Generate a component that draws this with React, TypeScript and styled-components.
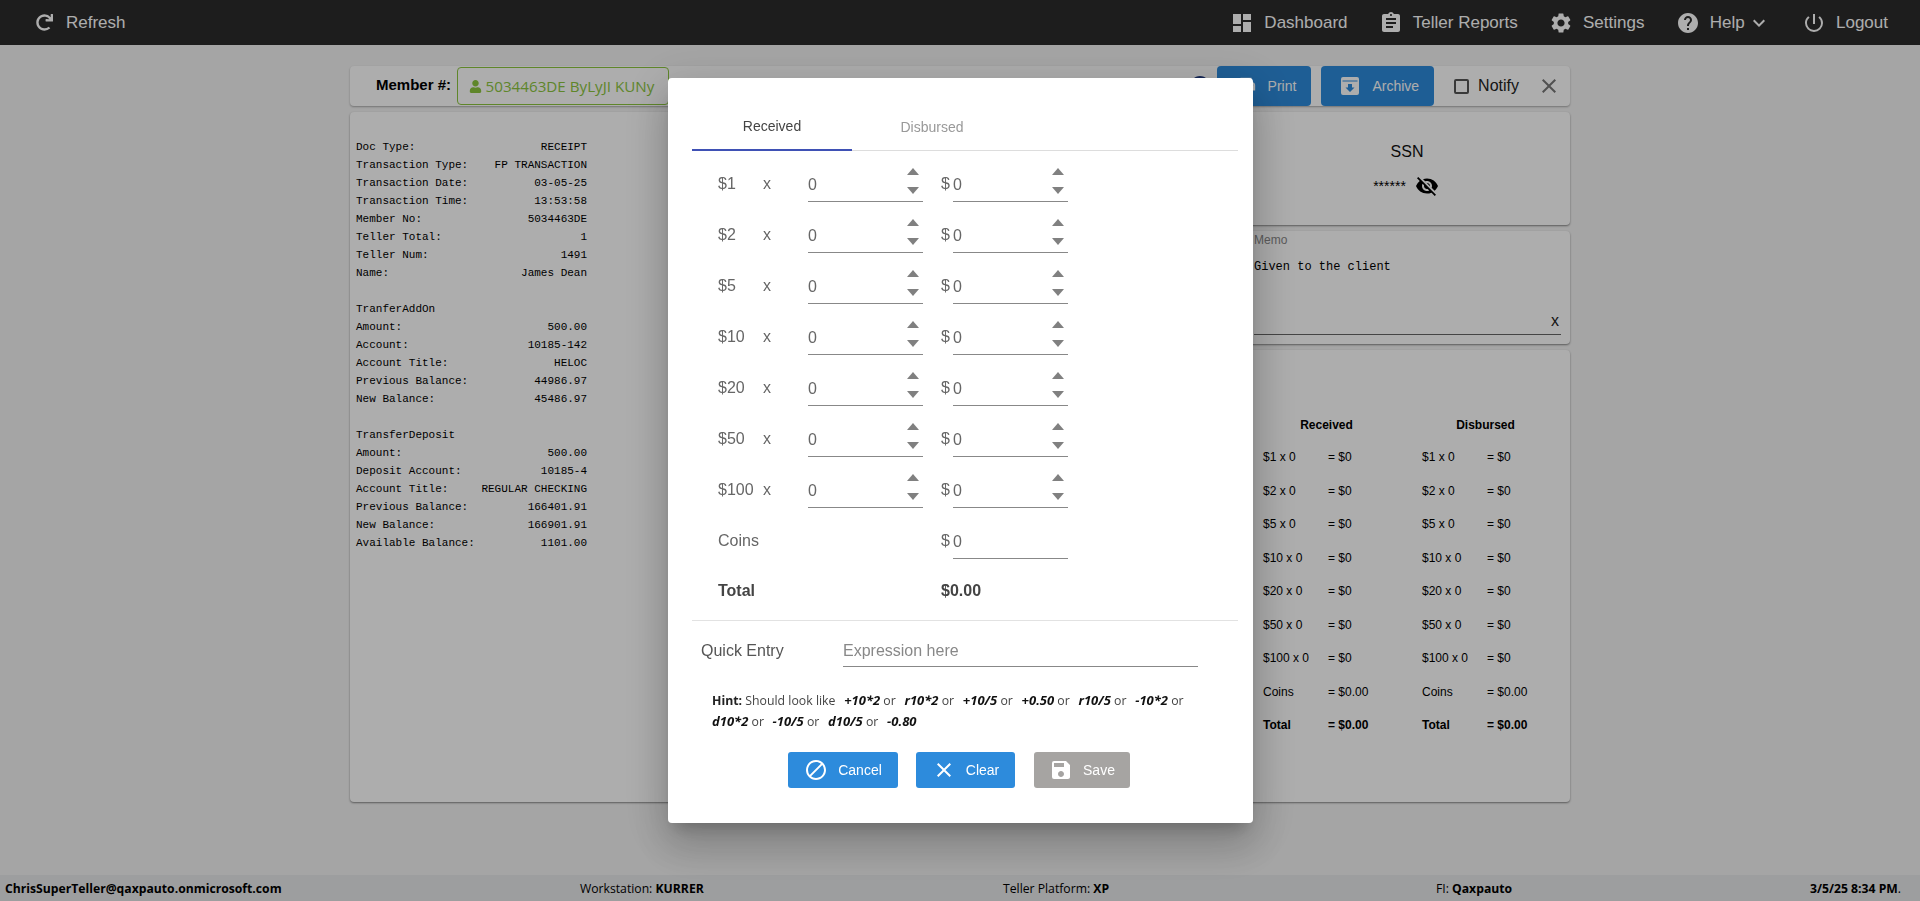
import React from "react";
import styled, { createGlobalStyle } from "styled-components";
import { FaRedo, FaUser } from "react-icons/fa";
import {
  MdClose,
  MdDashboard,
  MdBlock,
  MdSave,
  MdSettings,
  MdVisibilityOff,
  MdPrint,
  MdPowerSettingsNew,
  MdExpandMore,
  MdHelp,
  MdAssignment,
  MdInfo,
} from "react-icons/md";

const GlobalStyle = createGlobalStyle`
  html, body {
    margin: 0;
    height: 100%;
    overflow: hidden;
    background: #f3f3f3;
    font-family: "Liberation Sans", Arial, sans-serif;
  }
  * { box-sizing: border-box; }
`;

const Page = styled.div`
  height: 901px;
  display: flex;
  flex-direction: column;
`;

const TopBar = styled.header`
  height: 45px;
  flex: none;
  background: #2c2c2c;
  color: #fff;
  display: flex;
  align-items: center;
  justify-content: space-between;
  padding: 0 32px 0 36px;
  font-size: 17px;
`;

const NavGroup = styled.nav`
  display: flex;
  align-items: center;
  gap: 31.3px;
`;

const NavItem = styled.div`
  display: flex;
  align-items: center;
  gap: 10px;
  svg { font-size: 24px; }
`;

const RefreshItem = styled(NavItem)`
  gap: 13px;
  svg { font-size: 17px; }
`;

const HelpChevron = styled(MdExpandMore)`
  margin-left: -8px;
`;

const Main = styled.main`
  flex: 1;
  width: 1220px;
  margin: 21px auto 0;
  display: flex;
  flex-direction: column;
  gap: 6px;
`;

const Toolbar = styled.div`
  height: 40px;
  background: #fff;
  border-radius: 4px;
  box-shadow: 0 1px 2px rgba(0, 0, 0, 0.3);
  display: flex;
  align-items: center;
  padding: 0 9px 0 26px;
`;

const MemberLabel = styled.b`
  font-size: 15px;
  color: #000;
  margin: 0 5.5px 4px 0;
`;

const MemberBox = styled.div`
  width: 212px;
  height: 38px;
  border: 1px solid #8cc63f;
  border-radius: 4px;
  color: #8cc63f;
  font-size: 15.2px;
  font-family: "Open Sans", sans-serif;
  white-space: nowrap;
  display: flex;
  align-items: center;
  gap: 4px;
  padding-left: 11px;
  svg { font-size: 13px; }
`;

const ToolbarSpacer = styled.div`
  flex: 1;
`;

const StatusIcon = styled(MdInfo)`
  font-size: 24px;
  color: #1f3a80;
  margin-right: 5px;
`;

const ActionButton = styled.div`
  height: 40px;
  background: #2d8bdc;
  color: #fff;
  border-radius: 4px;
  display: flex;
  align-items: center;
  gap: 11px;
  padding: 0 15px 0 18px;
  font-size: 14px;
  margin-right: 10px;
  svg { font-size: 22px; }
`;

const ArchiveGlyph = styled.svg`
  width: 18px;
  height: 18px;
  margin: 0 2px;
  fill: currentColor;
`;

const Notify = styled.div`
  display: flex;
  align-items: center;
  gap: 9px;
  font-size: 16px;
  color: #222;
  margin: 0 18px 0 10px;
`;

const CheckBox = styled.span`
  width: 15px;
  height: 15px;
  border: 2px solid #555;
  border-radius: 2px;
`;

const CloseIcon = styled(MdClose)`
  font-size: 24px;
  color: #777;
`;

const Columns = styled.div`
  flex: 1;
  display: grid;
  grid-template-columns: 1fr 1fr;
  gap: 6px;
  margin-bottom: 73px;
`;

const Card = styled.section`
  background: #fff;
  border-radius: 4px;
  box-shadow: 0 1px 2px rgba(0, 0, 0, 0.45);
`;

const Receipt = styled.pre`
  margin: 0;
  padding: 26px 0 0 6px;
  font-family: "Liberation Mono", monospace;
  font-size: 11px;
  line-height: 18px;
  color: #000;
`;

const SideColumn = styled.div`
  min-width: 0;
  display: grid;
  grid-template-columns: minmax(0, 1fr);
  grid-template-rows: 113px 113px 1fr;
  gap: 6px;
`;

const SsnCard = styled(Card)`
  display: flex;
  flex-direction: column;
  align-items: center;
  padding: 31px 0 0 281px;
`;

const SsnTitle = styled.div`
  font-size: 16px;
  color: #111;
`;

const SsnValue = styled.div`
  display: flex;
  align-items: center;
  gap: 9px;
  font-size: 14px;
  color: #000;
  margin-top: 13px;
  margin-left: -2px;
  svg { font-size: 24px; }
`;

const MemoCard = styled(Card)`
  position: relative;
  padding: 2px 9px 0 291px;
`;

const MemoLabel = styled.div`
  font-size: 12px;
  color: #888;
`;

const MemoText = styled.div`
  font-family: "Liberation Mono", monospace;
  font-size: 12px;
  margin-top: 13px;
  height: 74px;
  color: #000;
`;

const MemoField = styled.div`
  border-bottom: 1px solid #666;
`;

const MemoClear = styled.span`
  position: absolute;
  right: 11px;
  top: 81px;
  font-size: 16px;
  color: #222;
`;

const SummaryCard = styled(Card)`
  padding: 68px 0 0 300px;
  font-size: 12px;
  color: #000;
`;

const SummaryGrid = styled.div`
  display: grid;
  grid-template-columns: 65px 94px 65px 94px;
  grid-template-rows: 32px;
  grid-auto-rows: 33.5px;
`;

const SummaryHead = styled.b`
  grid-column: span 2;
  text-align: center;
  padding-right: 32px;
`;

const SummaryCell = styled.div<{ $bold?: boolean }>`
  font-weight: ${(p) => (p.$bold ? 700 : 400)};
`;

const Footer = styled.footer`
  height: 26px;
  flex: none;
  background: #e8e9ea;
  display: flex;
  align-items: center;
  justify-content: space-between;
  padding: 0 11px 0 5px;
  font-family: "Open Sans", sans-serif;
  font-size: 12.2px;
  color: #000;
`;

const FooterItem = styled.div<{ $width: number }>`
  width: ${(p) => p.$width}px;
  white-space: nowrap;
`;

const Backdrop = styled.div`
  position: fixed;
  inset: 0;
  background: rgba(0, 0, 0, 0.32);
`;

const Modal = styled.div`
  position: fixed;
  left: 668px;
  top: 78px;
  width: 585px;
  height: 745px;
  background: #fff;
  border-radius: 4px;
  padding: 25px 15px 0 24px;
  box-shadow: 0 11px 15px -7px rgba(0, 0, 0, 0.2), 0 24px 38px 3px rgba(0, 0, 0, 0.14),
    0 9px 46px 8px rgba(0, 0, 0, 0.12);
`;

const Tabs = styled.div`
  display: flex;
  height: 48px;
  border-bottom: 1px solid #ddd;
`;

const Tab = styled.div<{ $active?: boolean }>`
  width: 160px;
  height: 48px;
  display: flex;
  align-items: center;
  justify-content: center;
  font-size: 14px;
  color: ${(p) => (p.$active ? "#444" : "#999")};
  border-bottom: ${(p) => (p.$active ? "2px solid #3f51b5" : "none")};
`;

const Rows = styled.div`
  padding-left: 26px;
`;

const DenomRow = styled.div`
  display: grid;
  grid-template-columns: 45px 45px 133px 12px 115px;
  align-items: end;
  height: 51px;
  font-size: 16px;
  color: #666;
`;

const DenomCell = styled.div`
  padding-bottom: 6px;
  line-height: 24px;
`;

const DenomInput = styled.div`
  position: relative;
  height: 30px;
  line-height: 25px;
  width: 115px;
  border-bottom: 1px solid #888;
`;

const Spinner = styled.div`
  position: absolute;
  right: 4px;
  top: -4px;
  display: flex;
  flex-direction: column;
  gap: 12px;
`;

const ArrowUp = styled.i`
  display: block;
  width: 0;
  height: 0;
  border-left: 6.5px solid transparent;
  border-right: 6.5px solid transparent;
  border-bottom: 7px solid #808080;
`;

const ArrowDown = styled.i`
  display: block;
  width: 0;
  height: 0;
  border-left: 6.5px solid transparent;
  border-right: 6.5px solid transparent;
  border-top: 7px solid #808080;
`;

const TotalRow = styled.div`
  display: grid;
  grid-template-columns: 223px 1fr;
  font-size: 16px;
  font-weight: 700;
  color: #444;
  padding: 20px 0 17px;
  line-height: 24px;
`;

const Divider = styled.div`
  height: 1px;
  background: #e2e2e2;
`;

const QuickRow = styled.div`
  display: flex;
  align-items: flex-end;
  padding: 14px 0 0 9px;
  font-size: 16px;
`;

const QuickLabel = styled.div`
  width: 142px;
  color: #555;
  line-height: 24px;
  padding-bottom: 4px;
`;

const QuickInput = styled.div`
  width: 355px;
  height: 32px;
  line-height: 31px;
  color: #888;
  border-bottom: 1px solid #888;
`;

const Hint = styled.div`
  margin: 23px 0 0 20px;
  width: 500px;
  font-family: "Open Sans", sans-serif;
  font-size: 12.3px;
  line-height: 20px;
  color: #444;
  b { color: #222; }
`;

const HintCode = styled.em<{ $first?: boolean }>`
  font-size: 13px;
  font-weight: 700;
  font-style: italic;
  color: #111;
  margin-left: ${(p) => (p.$first ? 0 : 5.5)}px;
`;

const ButtonRow = styled.div`
  display: flex;
  gap: 18px;
  margin: 20px 0 0 96px;
`;

const ModalButton = styled.div<{ $disabled?: boolean; $width: number }>`
  width: ${(p) => p.$width}px;
  height: 36px;
  margin-left: ${(p) => (p.$disabled ? 1 : 0)}px;
  background: ${(p) => (p.$disabled ? "#a6a4a2" : "#2d8bdc")};
  color: #fff;
  border-radius: 3px;
  display: flex;
  align-items: center;
  justify-content: center;
  gap: 10px;
  font-size: 14px;
  svg { font-size: 24px; }
`;

const RECEIPT_WIDTH = 35;

const receiptLines: (string | [string, string])[] = [
  ["Doc Type:", "RECEIPT"],
  ["Transaction Type:", "FP TRANSACTION"],
  ["Transaction Date:", "03-05-25"],
  ["Transaction Time:", "13:53:58"],
  ["Member No:", "5034463DE"],
  ["Teller Total:", "1"],
  ["Teller Num:", "1491"],
  ["Name:", "James Dean"],
  "",
  "TranferAddOn",
  ["Amount:", "500.00"],
  ["Account:", "10185-142"],
  ["Account Title:", "HELOC"],
  ["Previous Balance:", "44986.97"],
  ["New Balance:", "45486.97"],
  "",
  "TransferDeposit",
  ["Amount:", "500.00"],
  ["Deposit Account:", "10185-4"],
  ["Account Title:", "REGULAR CHECKING"],
  ["Previous Balance:", "166401.91"],
  ["New Balance:", "166901.91"],
  ["Available Balance:", "1101.00"],
];

const receipt = receiptLines
  .map((line) =>
    typeof line === "string" ? line : line[0].padEnd(RECEIPT_WIDTH - line[1].length) + line[1]
  )
  .join("\n");

const denominations = ["$1", "$2", "$5", "$10", "$20", "$50", "$100"];

const summaryRows = [
  ...denominations.map((d) => [`${d} x 0`, "= $0"]),
  ["Coins", "= $0.00"],
];

const Stepper = () => (
  <Spinner>
    <ArrowUp />
    <ArrowDown />
  </Spinner>
);

const App = () => {
  return (
    <>
      <GlobalStyle />
      <Page>
        <TopBar>
          <RefreshItem>
            <FaRedo />
            Refresh
          </RefreshItem>
          <NavGroup>
            <NavItem>
              <MdDashboard />
              Dashboard
            </NavItem>
            <NavItem>
              <MdAssignment />
              Teller Reports
            </NavItem>
            <NavItem>
              <MdSettings />
              Settings
            </NavItem>
            <NavItem>
              <MdHelp />
              Help
              <HelpChevron />
            </NavItem>
            <NavItem>
              <MdPowerSettingsNew />
              Logout
            </NavItem>
          </NavGroup>
        </TopBar>
        <Main>
          <Toolbar>
            <MemberLabel>Member #:</MemberLabel>
            <MemberBox>
              <FaUser />
              5034463DE ByLyJI KUNy
            </MemberBox>
            <ToolbarSpacer />
            <StatusIcon />
            <ActionButton>
              <MdPrint />
              Print
            </ActionButton>
            <ActionButton>
              <ArchiveGlyph viewBox="0 0 18 18">
                <path
                  fillRule="evenodd"
                  d="M2 0h14a2 2 0 0 1 2 2v14a2 2 0 0 1-2 2H2a2 2 0 0 1-2-2V2a2 2 0 0 1 2-2z M1.5 3.6v.8h15v-.8z M7 7v3.5H4.5L9 15l4.5-4.5H11V7z"
                />
              </ArchiveGlyph>
              Archive
            </ActionButton>
            <Notify>
              <CheckBox />
              Notify
            </Notify>
            <CloseIcon />
          </Toolbar>
          <Columns>
            <Card>
              <Receipt>{receipt}</Receipt>
            </Card>
            <SideColumn>
              <SsnCard>
                <SsnTitle>SSN</SsnTitle>
                <SsnValue>
                  ******
                  <MdVisibilityOff />
                </SsnValue>
              </SsnCard>
              <MemoCard>
                <MemoLabel>Memo</MemoLabel>
                <MemoField>
                  <MemoText>Given to the client</MemoText>
                </MemoField>
                <MemoClear>x</MemoClear>
              </MemoCard>
              <SummaryCard>
                <SummaryGrid>
                  <SummaryHead>Received</SummaryHead>
                  <SummaryHead>Disbursed</SummaryHead>
                  {summaryRows.map(([left, right]) => (
                    <React.Fragment key={left}>
                      <SummaryCell>{left}</SummaryCell>
                      <SummaryCell>{right}</SummaryCell>
                      <SummaryCell>{left}</SummaryCell>
                      <SummaryCell>{right}</SummaryCell>
                    </React.Fragment>
                  ))}
                  <SummaryCell $bold>Total</SummaryCell>
                  <SummaryCell $bold>= $0.00</SummaryCell>
                  <SummaryCell $bold>Total</SummaryCell>
                  <SummaryCell $bold>= $0.00</SummaryCell>
                </SummaryGrid>
              </SummaryCard>
            </SideColumn>
          </Columns>
        </Main>
        <Footer>
          <FooterItem $width={575}>
            <b>ChrisSuperTeller@qaxpauto.onmicrosoft.com</b>
          </FooterItem>
          <FooterItem $width={423}>
            Workstation: <b>KURRER</b>
          </FooterItem>
          <FooterItem $width={433}>
            Teller Platform: <b>XP</b>
          </FooterItem>
          <FooterItem $width={374}>
            FI: <b>Qaxpauto</b>
          </FooterItem>
          <FooterItem $width={99}>
            <b>3/5/25 8:34 PM</b>.
          </FooterItem>
        </Footer>
      </Page>
      <Backdrop />
      <Modal>
        <Tabs>
          <Tab $active>Received</Tab>
          <Tab>Disbursed</Tab>
        </Tabs>
        <Rows>
          {denominations.map((d) => (
            <DenomRow key={d}>
              <DenomCell>{d}</DenomCell>
              <DenomCell>x</DenomCell>
              <DenomInput>
                0
                <Stepper />
              </DenomInput>
              <DenomCell>$</DenomCell>
              <DenomInput>
                0
                <Stepper />
              </DenomInput>
            </DenomRow>
          ))}
          <DenomRow>
            <DenomCell>Coins</DenomCell>
            <DenomCell />
            <DenomCell />
            <DenomCell>$</DenomCell>
            <DenomInput>0</DenomInput>
          </DenomRow>
          <TotalRow>
            <span>Total</span>
            <span>$0.00</span>
          </TotalRow>
        </Rows>
        <Divider />
        <QuickRow>
          <QuickLabel>Quick Entry</QuickLabel>
          <QuickInput>Expression here</QuickInput>
        </QuickRow>
        <Hint>
          <b>Hint:</b> Should look like <HintCode>+10*2</HintCode> or <HintCode>r10*2</HintCode> or{" "}
          <HintCode>+10/5</HintCode> or <HintCode>+0.50</HintCode> or <HintCode>r10/5</HintCode> or{" "}
          <HintCode>-10*2</HintCode> or <br />
          <HintCode $first>d10*2</HintCode> or <HintCode>-10/5</HintCode> or{" "}
          <HintCode>d10/5</HintCode> or <HintCode>-0.80</HintCode>
        </Hint>
        <ButtonRow>
          <ModalButton $width={110}>
            <MdBlock />
            Cancel
          </ModalButton>
          <ModalButton $width={99}>
            <MdClose />
            Clear
          </ModalButton>
          <ModalButton $width={96} $disabled>
            <MdSave />
            Save
          </ModalButton>
        </ButtonRow>
      </Modal>
    </>
  );
};

export default App;
